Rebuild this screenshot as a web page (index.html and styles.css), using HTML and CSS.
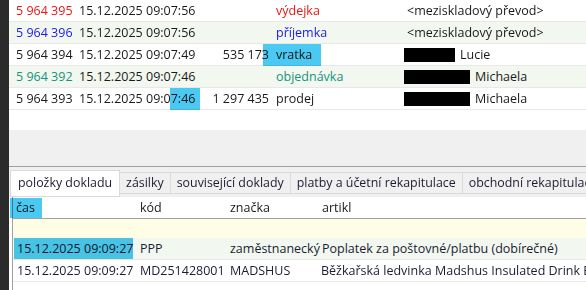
FILE: index.html
```html
<!DOCTYPE html>
<html lang="cs">
<head>
    <meta charset="UTF-8">
    <title>Doklady</title>
    <link rel="stylesheet" href="styles.css">
</head>
<body>
    <div class="app">
        <div class="side"></div>
        <div class="main">
            <div class="docs">
                <div class="doc-row out">
                    <span class="num">5 964 395</span>
                    <span class="date">15.12.2025 09:07:56</span>
                    <span class="amount"></span>
                    <span class="type">výdejka</span>
                    <span class="cust">&lt;meziskladový převod&gt;</span>
                </div>
                <div class="doc-row alt in">
                    <span class="num">5 964 396</span>
                    <span class="date">15.12.2025 09:07:56</span>
                    <span class="amount"></span>
                    <span class="type">příjemka</span>
                    <span class="cust">&lt;meziskladový převod&gt;</span>
                </div>
                <div class="doc-row">
                    <span class="num">5 964 394</span>
                    <span class="date">15.12.2025 09:07:49</span>
                    <span class="amount">535 173</span>
                    <span class="type">vratka</span>
                    <span class="cust"><span class="redact short"></span>Lucie</span>
                    <span class="mark mark-vratka"></span>
                </div>
                <div class="doc-row alt order">
                    <span class="num">5 964 392</span>
                    <span class="date">15.12.2025 09:07:46</span>
                    <span class="amount"></span>
                    <span class="type">objednávka</span>
                    <span class="cust"><span class="redact"></span>Michaela</span>
                </div>
                <div class="doc-row">
                    <span class="num">5 964 393</span>
                    <span class="date">15.12.2025 09:07:46</span>
                    <span class="amount">1 297 435</span>
                    <span class="type">prodej</span>
                    <span class="cust"><span class="redact"></span>Michaela</span>
                    <span class="mark mark-time"></span>
                </div>
            </div>

            <div class="gap"></div>
            <div class="toolbar"></div>

            <div class="tabs">
                <div class="tab active">položky dokladu</div>
                <div class="tab">zásilky</div>
                <div class="tab">související doklady</div>
                <div class="tab">platby a účetní rekapitulace</div>
                <div class="tab">obchodní rekapitulace</div>
            </div>

            <div class="items">
                <div class="item-row head">
                    <span>čas</span>
                    <span>kód</span>
                    <span>značka</span>
                    <span>artikl</span>
                    <span class="mark mark-head"></span>
                </div>
                <div class="filter-row"></div>
                <div class="item-row alt">
                    <span>15.12.2025 09:09:27</span>
                    <span>PPP</span>
                    <span>zaměstnanecký</span>
                    <span>Poplatek za poštovné/platbu (dobírečné)</span>
                    <span class="mark mark-date"></span>
                </div>
                <div class="item-row">
                    <span>15.12.2025 09:09:27</span>
                    <span>MD251428001</span>
                    <span>MADSHUS</span>
                    <span>Běžkařská ledvinka Madshus Insulated Drink Belt</span>
                </div>
            </div>
        </div>
    </div>
</body>
</html>
```

FILE: styles.css
```css
* {
    box-sizing: border-box;
}

body {
    margin: 0;
    font-family: "Open Sans", "Noto Sans", sans-serif;
    font-size: 12.5px;
    color: #1a1a1a;
    background-color: #fff;
    overflow: hidden;
}

.app {
    display: flex;
    height: 290px;
}

.side {
    width: 9px;
    flex-shrink: 0;
    background-color: #2b2b2b;
}

.main {
    flex: 1;
    min-width: 0;
    display: flex;
    flex-direction: column;
}

/* horni seznam dokladu */
.doc-row {
    position: relative;
    display: grid;
    grid-template-columns: 63px 120px 74px 131px 1fr;
    height: 22px;
    line-height: 21px;
    padding-left: 7px;
    border-bottom: 1px solid #e8e8e8;
    white-space: nowrap;
}

.doc-row.alt {
    background-color: #f2f8ef;
}

.doc-row .amount {
    text-align: right;
    padding-right: 4px;
}

.doc-row .type {
    padding-left: 3px;
}

.doc-row .cust {
    padding-left: 3px;
    display: flex;
    align-items: center;
}

.out .num,
.out .type {
    color: #f01414;
}

.in .num,
.in .type {
    color: #1a1aee;
}

.order .num,
.order .type {
    color: #15937c;
}

.redact {
    display: inline-block;
    width: 66px;
    height: 14px;
    margin-left: -3px;
    margin-right: 5px;
    background-color: #000;
}

.redact.short {
    width: 51px;
}

.mark {
    position: absolute;
    background-color: #4cc9f3;
    mix-blend-mode: multiply;
}

.mark-vratka {
    left: 254px;
    top: 0;
    width: 58px;
    height: 22px;
}

.mark-time {
    left: 161px;
    top: 0;
    width: 30px;
    height: 22px;
}

.gap {
    height: 20px;
}

.toolbar {
    height: 37px;
    background-color: #f0f0f0;
    border-bottom: 1px solid #a0a0a0;
}

/* zalozky */
.tabs {
    display: flex;
    align-items: flex-start;
    height: 30px;
    padding: 3px 0 0 1px;
    background-color: #f0f0f0;
    white-space: nowrap;
    overflow: hidden;
    font-size: 12.4px;
}

.tab {
    height: 22px;
    line-height: 20px;
    margin-top: 2px;
    padding: 0 6px;
    background-color: #f0f0f0;
    border: 1px solid #dadada;
    border-left: none;
    color: #1c1c34;
    flex-shrink: 0;
}

.tab.active {
    height: 27px;
    line-height: 24px;
    margin-top: 0;
    padding: 0 7px;
    background-color: #fff;
    border-left: 1px solid #dadada;
}

/* polozky dokladu */
.items {
    flex: 1;
    margin-left: 3px;
    border-left: 1px solid #a0a0a0;
    background-color: #fff;
}

.item-row {
    position: relative;
    display: grid;
    grid-template-columns: 124px 90px 92px 1fr;
    height: 22px;
    line-height: 21px;
    border-bottom: 1px solid #e8e8e8;
    white-space: nowrap;
    color: #1c1c34;
}

.item-row span {
    padding-left: 3px;
}

.item-row span:first-child {
    padding-left: 4px;
}

.item-row span:last-of-type {
    padding-left: 2px;
    overflow: hidden;
}

.item-row.head {
    border-bottom-color: #a0a0a0;
    color: #1a1a1a;
}

.item-row.head span:first-child {
    padding-left: 3px;
}

.item-row.alt {
    background-color: #f2f8ef;
}

.filter-row {
    height: 19px;
    background-color: #fefde6;
}

.mark-head {
    left: -3px;
    top: 1px;
    width: 32px;
    height: 20px;
}

.mark-date {
    left: 1px;
    top: 0;
    width: 119px;
    height: 21px;
}
```
